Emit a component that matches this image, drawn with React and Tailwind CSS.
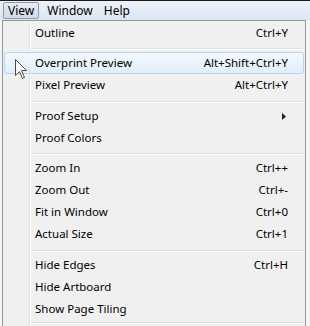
import React from 'react';

const font = { fontFamily: '"Segoe UI", "Noto Sans", "Open Sans", sans-serif' };

const groups = [
  [{ label: 'Outline', key: 'Ctrl+Y' }],
  [
    { label: 'Overprint Preview', key: 'Alt+Shift+Ctrl+Y', active: true },
    { label: 'Pixel Preview', key: 'Alt+Ctrl+Y' },
  ],
  [
    { label: 'Proof Setup', sub: true },
    { label: 'Proof Colors' },
  ],
  [
    { label: 'Zoom In', key: 'Ctrl++' },
    { label: 'Zoom Out', key: 'Ctrl+-' },
    { label: 'Fit in Window', key: 'Ctrl+0' },
    { label: 'Actual Size', key: 'Ctrl+1' },
  ],
  [
    { label: 'Hide Edges', key: 'Ctrl+H' },
    { label: 'Hide Artboard' },
    { label: 'Show Page Tiling' },
  ],
];

function Separator({ h }) {
  return (
    <div className={`${h} flex items-end pb-[2px] pl-[28px]`}>
      <div className="w-full border-t border-[#e0e0e0] border-b border-b-white" />
    </div>
  );
}

function Item({ item }) {
  return (
    <div
      className={`h-[22px] flex items-center pl-[30px] pr-[15px] text-[11.5px] text-black rounded-[3px] border ${
        item.active
          ? 'border-[#b8d6f0] bg-[linear-gradient(to_bottom,#f3f8fd,#e2eefa)]'
          : 'border-transparent'
      }`}
    >
      <span className="flex-1">{item.label}</span>
      {item.key && <span>{item.key}</span>}
      {item.sub && (
        <svg width="4" height="7" viewBox="0 0 4 7" className="mr-[2px]">
          <path d="M0 0 L4 3.5 L0 7 Z" fill="#222" />
        </svg>
      )}
    </div>
  );
}

export default function App() {
  return (
    <div className="w-[310px] h-[326px] relative overflow-hidden bg-[#f4f4f4] select-none" style={font}>
      <div className="h-[20px] border-t border-[#1c1c1c] bg-[linear-gradient(to_bottom,#eef3fa,#dbe5f2)] flex items-center pl-[3px] text-[12px] text-black">
        <div className="h-[17px] px-[4px] flex items-center rounded-[2px] border border-[#8d99ab] bg-[linear-gradient(to_bottom,#e7ecf3,#d3dbe6)]">
          View
        </div>
        <span className="ml-[8px]">Window</span>
        <span className="ml-[11px]">Help</span>
      </div>

      <div className="ml-[2px] w-[304px] h-[320px] border-l border-r border-t border-[#979797] pt-[1px] px-[1px] bg-[linear-gradient(to_right,#f0f0f0_26px,#e2e3e3_26px,#e2e3e3_27px,#ffffff_27px,#ffffff_28px,#f0f0f0_28px)]">
        {groups.map((g, gi) => (
          <div key={gi}>
            {gi > 0 && <Separator h={gi % 2 ? 'h-[8px]' : 'h-[9px]'} />}
            {g.map((item) => (
              <Item key={item.label} item={item} />
            ))}
          </div>
        ))}
        <div className="h-[5px] pt-[2px] pl-[28px]">
          <div className="w-full border-t border-[#e0e0e0] border-b border-b-white" />
        </div>
      </div>

      <svg className="absolute left-[15px] top-[59px]" width="13" height="21" viewBox="0 0 13 21">
        <path
          d="M0.5 0.5 L0.5 16.5 L4.5 12.5 L7.5 19.5 L9.5 18.5 L6.5 11.5 L11.5 11.5 Z"
          fill="#fff"
          stroke="#4a4a4a"
          strokeWidth="1"
          strokeLinejoin="round"
        />
      </svg>
    </div>
  );
}
